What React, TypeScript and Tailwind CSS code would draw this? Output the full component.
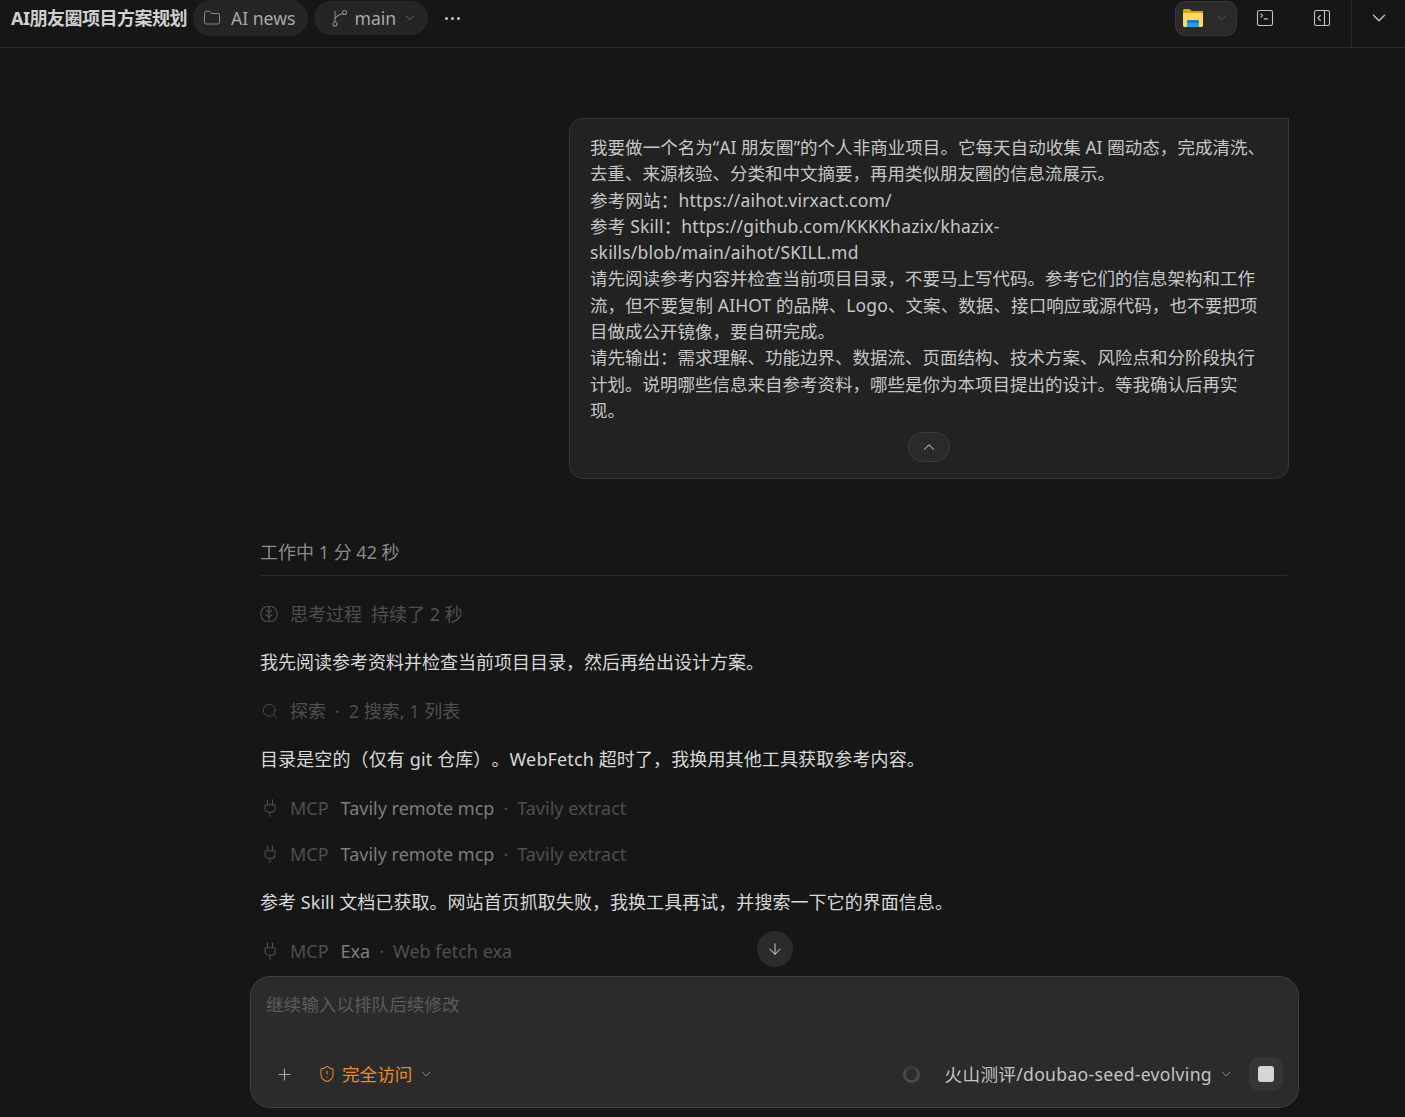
import { ArrowDown, ChevronDown, ChevronUp, Folder, PanelRightOpen, Plug, Plus, Search, ShieldAlert, SquareTerminal } from "lucide-react"

const font = "font-['Noto_Sans','Noto_Sans_CJK_SC',sans-serif]"

// lines with a lot of latin run a bit wide in the original font
const requestLines = [
  { text: "我要做一个名为“AI 朋友圈”的个人非商业项目。它每天自动收集 AI 圈动态，完成清洗、", cls: "tracking-[0.05px]" },
  { text: "去重、来源核验、分类和中文摘要，再用类似朋友圈的信息流展示。", cls: "" },
  { text: "参考网站：https://aihot.virxact.com/", cls: "tracking-[0.2px]" },
  { text: "参考 Skill：https://github.com/KKKKhazix/khazix-", cls: "tracking-[0.2px]" },
  { text: "skills/blob/main/aihot/SKILL.md", cls: "tracking-[0.2px]" },
  { text: "请先阅读参考内容并检查当前项目目录，不要马上写代码。参考它们的信息架构和工作", cls: "" },
  { text: "流，但不要复制 AIHOT 的品牌、Logo、文案、数据、接口响应或源代码，也不要把项", cls: "tracking-[0.1px]" },
  { text: "目做成公开镜像，要自研完成。", cls: "" },
  { text: "请先输出：需求理解、功能边界、数据流、页面结构、技术方案、风险点和分阶段执行", cls: "" },
  { text: "计划。说明哪些信息来自参考资料，哪些是你为本项目提出的设计。等我确认后再实", cls: "" },
  { text: "现。", cls: "" },
]

function BranchIcon() {
  return (
    <svg width="16" height="18" viewBox="0 0 16 18" fill="none" stroke="currentColor" strokeWidth="1.1">
      <circle cx="3" cy="15" r="2" />
      <circle cx="12.5" cy="3.5" r="2" />
      <path d="M3 13V2M3 11c0-3 2-4 4-5l3.7-1.6" />
    </svg>
  )
}

function ExplorerIcon() {
  return (
    <svg width="20" height="18" viewBox="0 0 20 18">
      <path d="M0 1.5C0 .7.6 0 1.4 0h5.2l2 2H20v3H0z" fill="#e0a100" />
      <path d="M0 4h20v12.6c0 .8-.6 1.4-1.4 1.4H1.4C.6 18 0 17.4 0 16.6z" fill="#fcd95f" />
      <path d="M4 12.6C4 11.700 4.700 11 5.600 11h8.800c.9 0 1.600.7 1.600 1.600V18H4z" fill="#1479d0" />
      <path d="M4 14h12v4H4z" fill="#2f9be8" />
    </svg>
  )
}

function BrainIcon() {
  return (
    <svg width="18" height="18" viewBox="0 0 18 18" fill="none" stroke="currentColor" strokeWidth="1.2">
      <path d="M9 1.500v15M6.500 1.500C3.500 1.800.8 5 .8 9c0 4 2.700 7.300 5.700 7.500 1.500.1 2.500-.6 2.500-.6s1 .7 2.500.6c3-.2 5.700-3.500 5.700-7.500 0-4-2.700-7.200-5.700-7.500C10 1.300 9 2.200 9 2.200S8 1.300 6.500 1.500Z" />
      <path d="M9 7.500 6 5M9 7.500 12 5M9 12 5.500 9.500M9 12l3.500-2.500" />
    </svg>
  )
}

function McpRow({ server, tool, className }: { server: string; tool: string; className: string }) {
  return (
    <div className={`flex h-6 items-center text-[#4f4f4f] ${className}`}>
      <Plug size={20} strokeWidth={1.3} className="w-5 shrink-0" />
      <span className="ml-[10px]">MCP</span>
      <span className="ml-[12px] text-[#7d7d7d]">{server}</span>
      <span className="mx-[9px]">·</span>
      <span>{tool}</span>
    </div>
  )
}

export default function App() {
  return (
    <div className={`${font} flex h-[1117px] w-[1405px] flex-col overflow-hidden bg-[#161616] text-[17.6px] text-[#d4d4d4] [text-spacing-trim:space-all]`}>
      <header className="flex h-12 shrink-0 items-center border-b border-[#2a2a2a] pb-[11px]">
        <h1 className="ml-[11px] whitespace-nowrap text-[18px] font-bold tracking-[-0.5px] text-[#cfcfcf]">AI朋友圈项目方案规划</h1>
        <div className="ml-[6px] flex h-9 items-center gap-[10px] rounded-full bg-[#252525] pl-[10px] pr-[13px] text-[#a8a8a8]">
          <Folder size={18} strokeWidth={1.3} className="text-[#8a8a8a]" />
          <span>AI news</span>
        </div>
        <div className="ml-[6px] flex h-[34px] w-[114px] items-center rounded-full bg-[#252525] pl-[18px] text-[#a8a8a8]">
          <span className="text-[#8a8a8a]"><BranchIcon /></span>
          <span className="ml-[6px]">main</span>
          <ChevronDown size={14} strokeWidth={1.4} className="ml-[7px] text-[#777]" />
        </div>
        <div className="ml-[17px] flex gap-[3px]">
          <span className="h-[3px] w-[3px] rounded-full bg-[#c4c4c4]" />
          <span className="h-[3px] w-[3px] rounded-full bg-[#c4c4c4]" />
          <span className="h-[3px] w-[3px] rounded-full bg-[#c4c4c4]" />
        </div>
        <div className="ml-auto flex items-center">
          <div className="flex h-[35px] w-[62px] items-center rounded-[10px] border border-[#383838] bg-[#2a2a2a] pl-[7px]">
            <ExplorerIcon />
            <ChevronDown size={14} strokeWidth={1.4} className="ml-[12px] text-[#666]" />
          </div>
          <SquareTerminal size={20} strokeWidth={1.3} className="ml-[18px] text-[#c4c4c4]" />
          <PanelRightOpen size={20} strokeWidth={1.3} className="ml-[37px] text-[#c4c4c4]" />
          <div className="ml-[19px] -mb-[11px] flex h-[47px] w-[54px] items-start justify-center border-l border-[#262626] pt-[7px]">
            <ChevronDown size={22} strokeWidth={1.5} className="text-[#c4c4c4]" />
          </div>
        </div>
      </header>

      <main className="relative flex min-h-0 flex-1 flex-col overflow-hidden pl-[260px] pr-[116px] text-[18px]">
        <section className="mt-[70px] ml-auto w-[720px] shrink-0 rounded-[14px] rounded-tr-none border border-[#363636] bg-[#222222] px-5 pb-[16px] pt-[15px] text-[17.5px] leading-[26.3px] text-[#c6c6c6]">
          {requestLines.map((line) => (
            <p key={line.text} className={`whitespace-nowrap ${line.cls}`}>{line.text}</p>
          ))}
          <div className="mt-[9px] flex justify-center">
            <button className="flex h-[30px] w-[42px] items-center justify-center rounded-full border border-[#3c3c3c] bg-[#2a2a2a]">
              <ChevronUp size={18} strokeWidth={1.4} className="text-[#c4c4c4]" />
            </button>
          </div>
        </section>

        <div className="mr-[2px] mt-[61px] h-[36px] shrink-0 border-b border-[#2a2a2a] text-[#8a8a8a]">
          <span className="block h-6 leading-6">工作中 1 分 42 秒</span>
        </div>

        <div className="mt-[26px] flex h-6 shrink-0 items-center text-[#4f4f4f]">
          <BrainIcon />
          <span className="ml-[12px]">思考过程</span>
          <span className="ml-[9px]">持续了 2 秒</span>
        </div>
        <p className="mt-6 h-6 shrink-0 leading-6 text-[#d8d8d8]">我先阅读参考资料并检查当前项目目录，然后再给出设计方案。</p>
        <div className="mt-[25px] flex h-6 shrink-0 items-center text-[#4f4f4f]">
          <Search size={18} strokeWidth={1.3} className="ml-[1px]" />
          <span className="ml-[11px]">探索</span>
          <span className="mx-[9px]">·</span>
          <span>2 搜索, 1 列表</span>
        </div>
        <p className="mt-6 h-6 shrink-0 leading-6 tracking-[0.12px] text-[#d8d8d8]">目录是空的（仅有 git 仓库）。WebFetch 超时了，我换用其他工具获取参考内容。</p>
        <McpRow className="mt-[25px] shrink-0" server="Tavily remote mcp" tool="Tavily extract" />
        <McpRow className="mt-[22px] shrink-0" server="Tavily remote mcp" tool="Tavily extract" />
        <p className="mt-6 h-6 shrink-0 leading-6 tracking-[0.05px] text-[#d8d8d8]">参考 Skill 文档已获取。网站首页抓取失败，我换工具再试，并搜索一下它的界面信息。</p>
        <McpRow className="mt-[25px] shrink-0" server="Exa" tool="Web fetch exa" />

        <button className="absolute left-[757px] top-[883px] flex h-9 w-9 items-center justify-center rounded-full bg-[#2b2b2b]">
          <ArrowDown size={18} strokeWidth={1.4} className="text-[#c4c4c4]" />
        </button>
      </main>

      <div className="mb-[9px] ml-[250px] flex h-[132px] w-[1049px] shrink-0 flex-col rounded-[20px] border border-[#3f3f3f] bg-[#2b2b2b] px-[15px] pb-[16px] pt-[15px]">
        <p className="h-6 leading-6 text-[#5c5c5c]">继续输入以排队后续修改</p>
        <div className="mt-auto flex h-[34px] items-center">
          <Plus size={19} strokeWidth={1.4} className="ml-[9px] text-[#a8a8a8]" />
          <ShieldAlert size={18} strokeWidth={1.4} className="ml-[24px] text-[#e98a2e]" />
          <span className="ml-[6px] text-[#e98a2e]">完全访问</span>
          <ChevronDown size={16} strokeWidth={1.4} className="ml-[6px] text-[#8a8a8a]" />
          <span className="ml-auto h-[17px] w-[17px] rounded-full border-[3px] border-[#4a4a4a] border-t-[#3a3a3a]" />
          <span className="ml-[25px] tracking-[0.3px] text-[#c4c4c4]">火山测评/doubao-seed-evolving</span>
          <ChevronDown size={16} strokeWidth={1.4} className="ml-[6px] text-[#8a8a8a]" />
          <div className="ml-[15px] flex h-[34px] w-[34px] items-center justify-center rounded-[10px] bg-[#353535]">
            <span className="h-4 w-4 rounded-[3px] bg-[#d6d6d6]" />
          </div>
        </div>
      </div>
    </div>
  )
}
